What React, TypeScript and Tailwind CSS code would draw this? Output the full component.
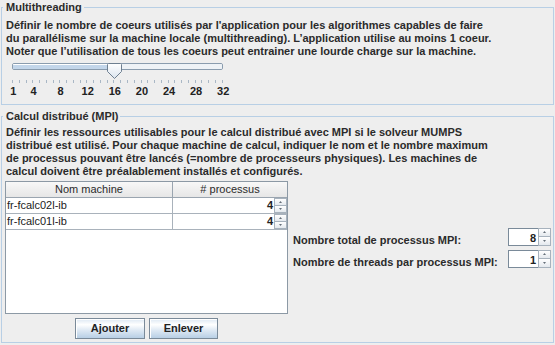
import React from 'react';

const font = "font-['Liberation_Sans',sans-serif]";

const ticks = Array.from({ length: 32 }, (_, i) => i + 1);
const labels = [1, 4, 8, 12, 16, 20, 24, 28, 32];
// x of a slider value, relative to the slider box
const pos = (v: number) => 6.7 + (v - 1) * (210 / 31);

const machines = [
  { name: 'fr-fcalc02l-ib', procs: 4 },
  { name: 'fr-fcalc01l-ib', procs: 4 },
];

function SpinArrows({ className }: { className: string }) {
  return (
    <div className={`flex flex-col ${className}`}>
      <div className="flex-1 flex items-center justify-center border border-[#a7b2bd] bg-gradient-to-b from-white to-[#e4e9ee]">
        <svg width="3" height="2" viewBox="0 0 3 2">
          <path d="M1.5 0L3 2H0z" fill="#66707a" />
        </svg>
      </div>
      <div className="flex-1 flex items-center justify-center border border-t-0 border-[#a7b2bd] bg-gradient-to-b from-white to-[#e4e9ee]">
        <svg width="3" height="2" viewBox="0 0 3 2">
          <path d="M0 0H3L1.5 2z" fill="#66707a" />
        </svg>
      </div>
    </div>
  );
}

function Spinner({ value }: { value: number }) {
  return (
    <div className="h-[18px] flex">
      <div className="flex-1 flex items-end justify-end pr-[2px] pb-[1px] leading-[11px] bg-white border border-[#7a8a99] border-r-0 text-[#222]">
        {value}
      </div>
      <SpinArrows className="w-[13px]" />
    </div>
  );
}

function Slider() {
  const value = 16;
  return (
    <div className="relative h-[40px] w-[232px]">
      <div className="mt-[5px] ml-[6px] w-[211px] h-[7px] flex border border-[#8a9cae] rounded-[2px] overflow-hidden">
        <div className="bg-[#c3d6ea] border-t border-white" style={{ width: pos(value) - 6 }} />
        <div className="flex-1 bg-[#eef2f6]" />
      </div>
      <svg
        className="absolute top-0"
        style={{ left: pos(value) - 7.5 }}
        width="15"
        height="16"
        viewBox="0 0 15 16"
      >
        <defs>
          <linearGradient id="thumb" x1="0" y1="0" x2="0" y2="1">
            <stop offset="0" stopColor="#ffffff" />
            <stop offset="1" stopColor="#dbe4ee" />
          </linearGradient>
        </defs>
        <path d="M1.5 0.5H13.5L14.5 1.5V8.5L7.5 15.5L0.5 8.5V1.5Z" fill="url(#thumb)" stroke="#6e7f90" />
      </svg>
      <div className="mt-[10px] ml-[6px] w-[211px] h-[3px] flex justify-between">
        {ticks.map((t) => (
          <div key={t} className="w-[1px] bg-[#a9b7c5]" />
        ))}
      </div>
      <div className="relative mt-[2px] h-[12px]">
        {labels.map((l) => (
          <span
            key={l}
            className="absolute top-0 -translate-x-1/2 leading-[12px] text-[#222]"
            style={{ left: pos(l) + 0.5 }}
          >
            {l}
          </span>
        ))}
      </div>
    </div>
  );
}

function Button({ label, w }: { label: string; w: string }) {
  return (
    <div
      className={`${w} h-[21px] flex items-center justify-center border border-[#7a8a99] bg-[linear-gradient(to_bottom,#dde8f3_0%,#ffffff_30%,#dde8f3_60%,#b8cfe5_100%)] shadow-[inset_1px_1px_0_#ffffff] text-[#222]`}
    >
      {label}
    </div>
  );
}

export default function App() {
  return (
    <div
      className={`${font} w-[555px] h-[345px] overflow-hidden bg-[#eeeeee] pt-[1px] text-[11px] leading-[13px] font-bold text-[#2b2b2b]`}
    >
      {/* Multithreading */}
      <fieldset className="mx-[1px] border border-[#b8cfe5] pl-[4px] pr-[2px] pt-[5px] pb-[1px]">
        <legend className="-ml-[3px] pl-[3px] pr-[2px]">Multithreading</legend>
        <div className="whitespace-nowrap">
          <div>Définir le nombre de coeurs utilisés par l'application pour les algorithmes capables de faire</div>
          <div>du parallélisme sur la machine locale (multithreading). L’application utilise au moins 1 coeur.</div>
          <div>Noter que l’utilisation de tous les coeurs peut entrainer une lourde charge sur la machine.</div>
        </div>
        <Slider />
      </fieldset>

      {/* Calcul distribué */}
      <fieldset className="mt-[5px] mx-[1px] border border-[#b8cfe5] pl-[3px] pr-[2px] pt-[3px] pb-[3px]">
        <legend className="-ml-[2px] pl-[3px] pr-[2px]">Calcul distribué (MPI)</legend>
        <div className="pl-[1px] whitespace-nowrap">
          <div>Définir les ressources utilisables pour le calcul distribué avec MPI si le solveur MUMPS</div>
          <div>distribué est utilisé. Pour chaque machine de calcul, indiquer le nom et le nombre maximum</div>
          <div>de processus pouvant être lancés (=nombre de processeurs physiques). Les machines de</div>
          <div>calcul doivent être préalablement installés et configurés.</div>
        </div>

        <div className="mt-[3px] flex">
          <div className="w-[283px] flex flex-col">
            {/* table */}
            <div className="h-[133px] flex flex-col border border-[#8c99a5] bg-white font-normal">
              <div className="h-[16px] flex border-b border-[#9aa5b0] bg-gradient-to-b from-[#f8f8f8] to-[#e6e6e6]">
                <div className="w-[167px] flex items-center justify-center border-r border-[#9aa5b0]">Nom machine</div>
                <div className="flex-1 flex items-center justify-center"># processus</div>
              </div>
              {machines.map((m) => (
                <div key={m.name} className="h-[16px] flex border-b border-[#a9b2bb]">
                  <div className="w-[167px] pl-[1px] flex items-center border-r border-[#a9b2bb] text-[#222]">{m.name}</div>
                  <div className="flex-1 flex">
                    <div className="flex-1 flex items-center justify-end pr-[1px] font-bold text-[#222]">{m.procs}</div>
                    <SpinArrows className="w-[13px]" />
                  </div>
                </div>
              ))}
            </div>
            <div className="mt-[4px] flex justify-center gap-[4px]">
              <Button label="Ajouter" w="w-[70px]" />
              <Button label="Enlever" w="w-[69px]" />
            </div>
          </div>

          <div className="ml-[4px] flex-1 h-[133px] flex flex-col justify-center">
            <div className="grid grid-cols-[1fr_43px] gap-y-[4px] items-end pl-[1px]">
              <div className="leading-[11px]">Nombre total de processus MPI:</div>
              <Spinner value={8} />
              <div className="leading-[11px]">Nombre de threads par processus MPI:</div>
              <Spinner value={1} />
            </div>
          </div>
        </div>
      </fieldset>
    </div>
  );
}
